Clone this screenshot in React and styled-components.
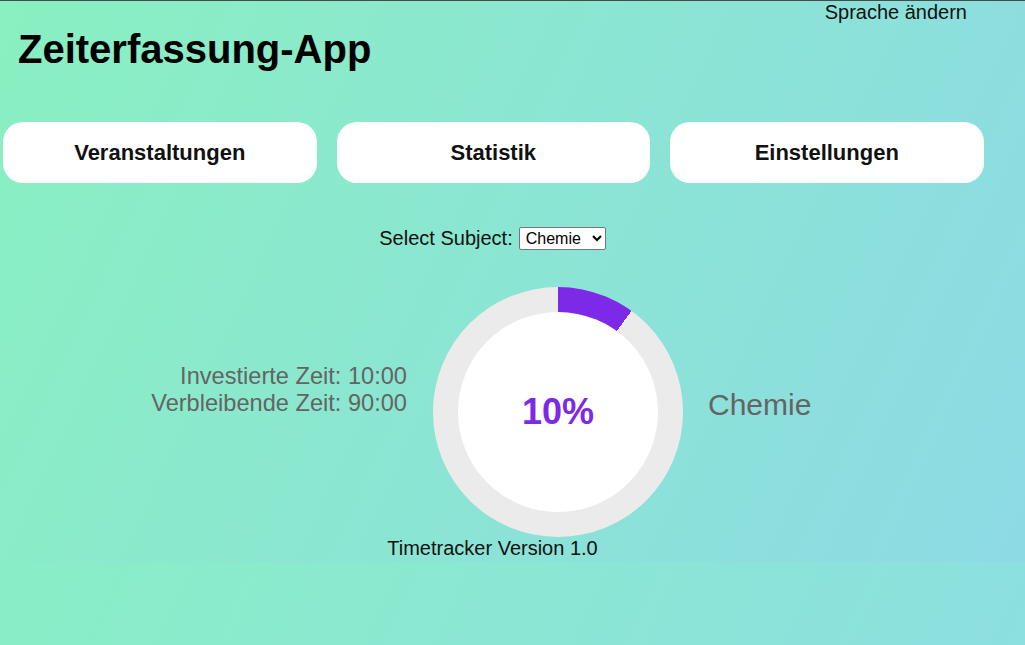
import React, { useState } from "react";
import styled, { createGlobalStyle } from "styled-components";

const GlobalStyle = createGlobalStyle`
  html {
    min-height: 100%;
    background: linear-gradient(115deg, #88f2c0 0%, #8ddfe0 100%);
  }
  body {
    margin: 0;
    border-top: 1px solid #4a4a4a;
    font-family: "Liberation Sans", Arial, sans-serif;
    color: #111;
  }
`;

const Page = styled.div`
  background: linear-gradient(115deg, #89f0c1 0%, #8ddae5 100%);
`;

const Content = styled.div`
  width: 985px;
  display: flex;
  flex-direction: column;
`;

const TopBar = styled.div`
  display: flex;
  justify-content: flex-end;
  padding-right: 18px;
`;

const LangButton = styled.button`
  border: none;
  background: transparent;
  padding: 0;
  font-family: "Liberation Sans", Arial, sans-serif;
  font-size: 20px;
  line-height: 23px;
  color: #111;
  cursor: pointer;
`;

const Title = styled.h1`
  margin: 2px 0 0 18px;
  font-size: 40px;
  line-height: 46px;
  font-weight: 700;
  color: #000;
`;

const Nav = styled.nav`
  display: grid;
  grid-template-columns: repeat(3, 313.5px);
  column-gap: 20px;
  padding-left: 3px;
  margin-top: 50px;
`;

const NavButton = styled.button`
  height: 61px;
  border: none;
  border-radius: 20px;
  background: #fff;
  font-family: "Liberation Sans", Arial, sans-serif;
  font-size: 22px;
  font-weight: 700;
  color: #111;
  cursor: pointer;
`;

const SelectRow = styled.div`
  margin-top: 44px;
  display: flex;
  justify-content: center;
  align-items: center;
  font-size: 20px;
  line-height: 23px;
`;

const SubjectSelect = styled.select`
  margin-left: 6px;
  width: 87px;
  height: 23px;
  padding: 0 2px;
  font-family: "Liberation Sans", Arial, sans-serif;
  font-size: 16px;
  color: #000;
  background: #fff;
  border: 1px solid #767676;
  border-radius: 2px;
`;

const ChartRow = styled.div`
  margin-top: 37px;
  display: flex;
  align-items: flex-start;
`;

const Stats = styled.div`
  width: 407px;
  margin-top: 76px;
  text-align: right;
  font-size: 23.6px;
  line-height: 27px;
  color: #646464;
`;

const Donut = styled.div`
  width: 250px;
  height: 250px;
  margin-left: 26px;
  border-radius: 50%;
  background: conic-gradient(#7d2ae8 0 ${(p) => p.$pct}%, #ebebeb ${(p) => p.$pct}% 100%);
  display: flex;
  align-items: center;
  justify-content: center;
`;

const DonutInner = styled.div`
  width: 200px;
  height: 200px;
  border-radius: 50%;
  background: #fff;
  display: flex;
  align-items: center;
  justify-content: center;
  font-size: 36px;
  font-weight: 700;
  color: #7d2ae8;
`;

const SubjectName = styled.div`
  margin-left: 25px;
  margin-top: 100px;
  font-size: 30px;
  line-height: 35px;
  color: #646464;
`;

const Footer = styled.footer`
  text-align: center;
  font-size: 20px;
  line-height: 23px;
  padding-bottom: 2px;
`;

export default function App() {
  const [subject, setSubject] = useState("Chemie");
  const pct = 10;
  return (
    <>
      <GlobalStyle />
      <Page>
        <Content>
          <TopBar>
            <LangButton>Sprache ändern</LangButton>
          </TopBar>
          <Title>Zeiterfassung-App</Title>
          <Nav>
            <NavButton>Veranstaltungen</NavButton>
            <NavButton>Statistik</NavButton>
            <NavButton>Einstellungen</NavButton>
          </Nav>
          <SelectRow>
            <label htmlFor="subject">Select Subject:</label>
            <SubjectSelect
              id="subject"
              value={subject}
              onChange={(e) => setSubject(e.target.value)}
            >
              <option>Chemie</option>
              <option>Mathe</option>
              <option>Physik</option>
            </SubjectSelect>
          </SelectRow>
          <ChartRow>
            <Stats>
              <div>Investierte Zeit: 10:00</div>
              <div>Verbleibende Zeit: 90:00</div>
            </Stats>
            <Donut $pct={pct}>
              <DonutInner>{pct}%</DonutInner>
            </Donut>
            <SubjectName>{subject}</SubjectName>
          </ChartRow>
          <Footer>Timetracker Version 1.0</Footer>
        </Content>
      </Page>
    </>
  );
}
